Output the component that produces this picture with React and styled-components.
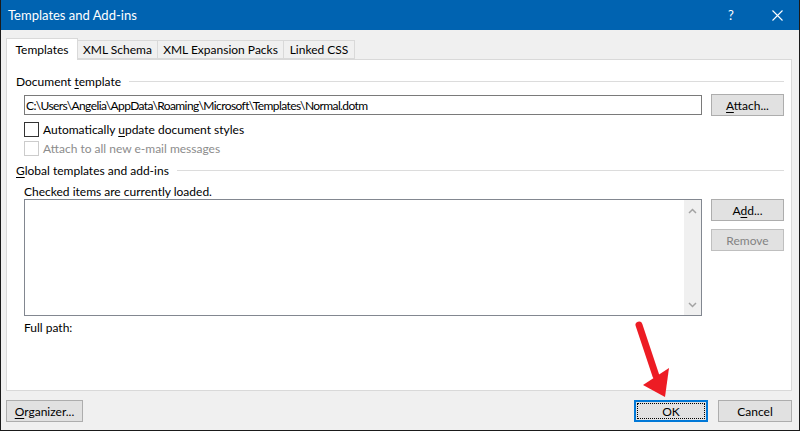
import React from 'react';
import styled, { createGlobalStyle } from 'styled-components';

const Global = createGlobalStyle`
  html, body { margin: 0; padding: 0; background: #fff; }
  body { font-family: Lato, "Noto Sans", Arial, sans-serif; font-size: 12px; color: #000; }
  * { box-sizing: border-box; }
`

const Window = styled.div`
  position: relative;
  width: 800px;
  height: 431px;
  display: flex;
  flex-direction: column;
  background: #f0f0f0;
  border: 1px solid #1a1a1a;
  border-top: none;
  overflow: hidden;
`

const TitleBar = styled.div`
  height: 30px;
  flex: none;
  display: flex;
  align-items: center;
  background: #0063b1;
  color: #fff;
  margin: 0 -1px;
`

const Title = styled.div`
  flex: 1;
  padding-left: 8px;
  font-size: 13px;
`

const TitleBtn = styled.div`
  width: 46px;
  height: 30px;
  display: flex;
  align-items: center;
  justify-content: center;
  font-size: 13px;
`

const Body = styled.div`
  flex: 1;
  display: flex;
  flex-direction: column;
  padding: 8px 7px 0 5px;
`

const Tabs = styled.div`
  display: flex;
  align-items: flex-end;
  height: 21px;
  position: relative;
  z-index: 1;
`

const Tab = styled.div`
  width: ${p => p.w}px;
  height: ${p => p.active ? '22px' : '19px'};
  margin-bottom: ${p => p.active ? '-1px' : '0'};
  display: flex;
  align-items: center;
  justify-content: center;
  background: ${p => p.active ? '#fff' : '#f0f0f0'};
  border: 1px solid #d9d9d9;
  border-bottom: ${p => p.active ? 'none' : '1px solid #d9d9d9'};
  margin-left: ${p => p.first ? '0' : '-1px'};
  white-space: nowrap;
`

const Panel = styled.div`
  height: 332px;
  background: #fff;
  border: 1px solid #d9d9d9;
  padding: 13px 7px 0 9px;
  display: flex;
  flex-direction: column;
`

const Heading = styled.div`
  display: flex;
  align-items: center;
  height: 16px;
  margin-top: ${p => p.top || 0}px;
  &::after {
    content: '';
    flex: 1;
    height: 1px;
    background: #dcdcdc;
    margin-left: 8px;
  }
`

const U = styled.span`
  text-decoration: underline;
  text-underline-offset: 2px;
`

const Indent = styled.div`
  padding-left: 8px;
`

const Row = styled.div`
  display: flex;
  gap: 9px;
  align-items: ${p => p.align || 'center'};
  margin-top: ${p => p.top || 0}px;
`

const PathInput = styled.div`
  flex: 1;
  height: 20px;
  border: 1px solid #7a7a7a;
  display: flex;
  align-items: center;
  padding-left: 1px;
  white-space: nowrap;
  overflow: hidden;
  letter-spacing: -0.6px;
`

const Button = styled.div`
  width: ${p => p.w || 73}px;
  height: 22px;
  flex: none;
  display: flex;
  align-items: center;
  justify-content: center;
  background: #e1e1e1;
  border: 1px solid ${p => p.disabled ? '#bfbfbf' : '#adadad'};
  color: ${p => p.disabled ? '#838383' : '#000'};
`

const DefaultButton = styled(Button)`
  border: 2px solid #0078d7;
  padding: 1px;
  & > span {
    flex: 1;
    align-self: stretch;
    display: flex;
    align-items: center;
    justify-content: center;
    border: 1px dotted #000;
  }
`

const Check = styled.label`
  display: flex;
  align-items: center;
  gap: 4px;
  height: 19px;
  margin-left: 8px;
  margin-top: ${p => p.top || 0}px;
  color: ${p => p.disabled ? '#8c8c8c' : '#000'};
  &::before {
    content: '';
    width: 13px;
    height: 13px;
    border: 1px solid ${p => p.disabled ? '#cccccc' : '#333'};
    background: #fff;
  }
`

const Note = styled.div`
  height: 16px;
  display: flex;
  align-items: center;
  margin-top: ${p => p.top || 0}px;
`

const ListBox = styled.div`
  flex: 1;
  height: 117px;
  border: 1px solid #828790;
  display: flex;
  justify-content: flex-end;
`

const ScrollBar = styled.div`
  width: 17px;
  background: #f0f0f0;
  display: flex;
  flex-direction: column;
  justify-content: space-between;
  align-items: center;
  padding: 8px 0 7px;
`

const SideButtons = styled.div`
  display: flex;
  flex-direction: column;
  gap: 8px;
`

const Footer = styled.div`
  display: flex;
  align-items: center;
  gap: 10px;
  padding-top: 9px;
`

const Spacer = styled.div`
  flex: 1;
`

const Arrow = styled.svg`
  position: absolute;
  left: 0;
  top: 0;
  pointer-events: none;
`

const Chevron = ({ up }) => (
  <svg width="9" height="6" viewBox="0 0 9 6">
    <path d={up ? 'M1 5 L4.5 1.5 L8 5' : 'M1 1 L4.5 4.5 L8 1'} fill="none" stroke="#a3a3a3" strokeWidth="1.5" />
  </svg>
)

export default function App() {
  return (
    <>
      <Global />
      <Window>
        <TitleBar>
          <Title>Templates and Add-ins</Title>
          <TitleBtn>?</TitleBtn>
          <TitleBtn>
            <svg width="11" height="11" viewBox="0 0 11 11">
              <path d="M0.5 0.5 L10.5 10.5 M10.5 0.5 L0.5 10.5" stroke="#fff" strokeWidth="1.1" />
            </svg>
          </TitleBtn>
        </TitleBar>
        <Body>
          <Tabs>
            <Tab active first w={72}>Templates</Tab>
            <Tab w={81}>XML Schema</Tab>
            <Tab w={127}>XML Expansion Packs</Tab>
            <Tab w={72}>Linked CSS</Tab>
          </Tabs>
          <Panel>
            <Heading><span>Document <U>t</U>emplate</span></Heading>
            <Indent>
              <Row top={5}>
                <PathInput>C:\Users\Angelia\AppData\Roaming\Microsoft\Templates\Normal.dotm</PathInput>
                <Button><span><U>A</U>ttach...</span></Button>
              </Row>
            </Indent>
            <Check top={4}><span>Automatically <U>u</U>pdate document styles</span></Check>
            <Check disabled><span>Attach to all new e-mail messages</span></Check>
            <Heading top={4}><span><U>G</U>lobal templates and add-ins</span></Heading>
            <Indent>
              <Note top={5}>Checked items are currently loaded.</Note>
              <Row top={0} align="flex-start">
                <ListBox>
                  <ScrollBar>
                    <Chevron up />
                    <Chevron />
                  </ScrollBar>
                </ListBox>
                <SideButtons>
                  <Button><span>A<U>d</U>d...</span></Button>
                  <Button disabled>Remove</Button>
                </SideButtons>
              </Row>
              <Note top={3}>Full path:</Note>
            </Indent>
          </Panel>
          <Footer>
            <Button w={77}><span><U>O</U>rganizer...</span></Button>
            <Spacer />
            <DefaultButton w={74}><span>OK</span></DefaultButton>
            <Button w={74}>Cancel</Button>
          </Footer>
        </Body>
        <Arrow width="800" height="431">
          <line x1="638" y1="325" x2="655" y2="376" stroke="#ed1c24" strokeWidth="7" strokeLinecap="round" />
          <polygon points="642,385 668,368 664,397" fill="#ed1c24" />
        </Arrow>
      </Window>
    </>
  );
}
